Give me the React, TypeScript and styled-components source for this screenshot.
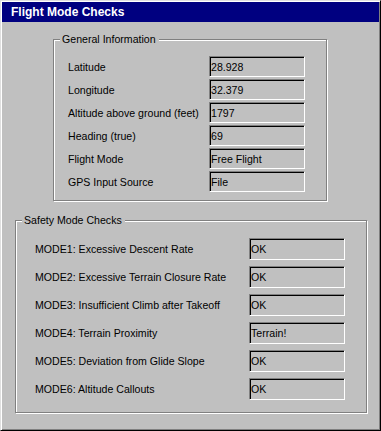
import React from 'react'
import styled, { createGlobalStyle } from 'styled-components'

const GlobalStyle = createGlobalStyle`
  html, body {
    margin: 0;
    padding: 0;
    background: #c0c0c0;
  }
  body {
    font-family: "Liberation Sans", Arial, sans-serif;
    font-size: 10.6px;
    color: #000;
  }
`

const Window = styled.div`
  width: 381px;
  height: 431px;
  box-sizing: border-box;
  background: #c0c0c0;
  border: 1px solid;
  border-color: #dfdfdf #000 #000 #dfdfdf;
  box-shadow: inset 1px 1px #fff, inset -1px -1px #808080;
  padding: 1px;
  overflow: hidden;
`

const TitleBar = styled.div`
  height: 20px;
  line-height: 20px;
  background: #000080;
  color: #fff;
  font-weight: bold;
  font-size: 12px;
  padding-left: 9px;
  white-space: nowrap;
`

const Body = styled.div`
  display: flex;
  flex-direction: column;
  align-items: flex-start;
  padding-top: 17px;
`

const Group = styled.div<{ $ml: number; $mt: number; $w: number; $pad: string }>`
  position: relative;
  box-sizing: border-box;
  margin-left: ${({ $ml }) => $ml}px;
  margin-top: ${({ $mt }) => $mt}px;
  width: ${({ $w }) => $w}px;
  padding: ${({ $pad }) => $pad};
  border: 1px solid #808080;
  box-shadow: inset 1px 1px #fff, 1px 1px #fff;
`

const Legend = styled.span`
  position: absolute;
  top: -7px;
  left: 6px;
  line-height: 13px;
  padding: 0 3px 0 2px;
  background: #c0c0c0;
  white-space: nowrap;
`

const Rows = styled.div<{ $rowH: number; $gap: number }>`
  display: grid;
  grid-template-columns: 1fr 96px;
  grid-auto-rows: ${({ $rowH }) => $rowH}px;
  row-gap: ${({ $gap }) => $gap}px;
`

const Label = styled.div`
  display: flex;
  align-items: center;
  white-space: nowrap;
`

const Field = styled.div`
  box-sizing: border-box;
  display: flex;
  align-items: center;
  padding-left: 1px;
  background: #c0c0c0;
  border: 1px solid;
  border-color: #808080 #fff #fff #808080;
  box-shadow: inset 1px 1px #000, inset -1px -1px #c0c0c0;
  white-space: nowrap;
  overflow: hidden;
`

const general = [
  ['Latitude', '28.928'],
  ['Longitude', '32.379'],
  ['Altitude above ground (feet)', '1797'],
  ['Heading (true)', '69'],
  ['Flight Mode', 'Free Flight'],
  ['GPS Input Source', 'File'],
]

const safety = [
  ['MODE1: Excessive Descent Rate', 'OK'],
  ['MODE2: Excessive Terrain Closure Rate', 'OK'],
  ['MODE3: Insufficient Climb after Takeoff', 'OK'],
  ['MODE4: Terrain Proximity', 'Terrain!'],
  ['MODE5: Deviation from Glide Slope', 'OK'],
  ['MODE6: Altitude Callouts', 'OK'],
]

export default function App() {
  return (
    <>
      <GlobalStyle />
      <Window>
        <TitleBar>Flight Mode Checks</TitleBar>
        <Body>
          <Group $ml={51} $mt={0} $w={274} $pad="16px 21px 8px 14px">
            <Legend>General Information</Legend>
            <Rows $rowH={21} $gap={2}>
              {general.map(([label, value]) => (
                <React.Fragment key={label}>
                  <Label>{label}</Label>
                  <Field>{value}</Field>
                </React.Fragment>
              ))}
            </Rows>
          </Group>
          <Group $ml={13} $mt={19} $w={352} $pad="17px 21px 12px 19px">
            <Legend>Safety Mode Checks</Legend>
            <Rows $rowH={22} $gap={6}>
              {safety.map(([label, value]) => (
                <React.Fragment key={label}>
                  <Label>{label}</Label>
                  <Field>{value}</Field>
                </React.Fragment>
              ))}
            </Rows>
          </Group>
        </Body>
      </Window>
    </>
  )
}
